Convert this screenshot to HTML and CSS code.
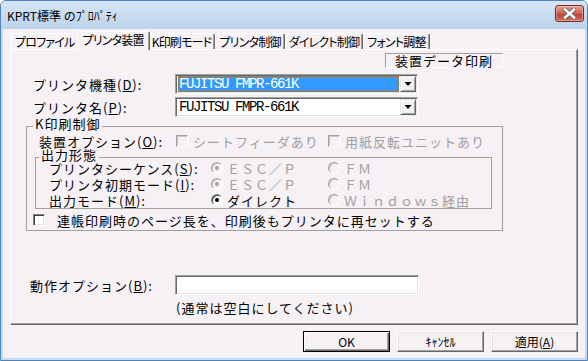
FILE: index.html
```html
<!DOCTYPE html>
<html lang="ja">
<head>
  <meta charset="UTF-8" />
  <title>KPRT標準 のﾌﾟﾛﾊﾟﾃｨ</title>
  <link rel="stylesheet" href="styles.css">
</head>
<body>

  <div class="window">
    <div class="titlebar">
      <span class="title">KPRT標準 のﾌﾟﾛﾊﾟﾃｨ</span>
      <button class="close-btn" aria-label="閉じる">
        <svg width="13" height="11" viewBox="0 0 13 11">
          <path d="M2 1.5 L11 9.5 M11 1.5 L2 9.5" stroke="#6b6b6b" stroke-width="4.4" stroke-linecap="square"/>
          <path d="M2 1.5 L11 9.5 M11 1.5 L2 9.5" stroke="#ffffff" stroke-width="2.4" stroke-linecap="square"/>
        </svg>
      </button>
    </div>

    <div class="client">
      <div class="tabs">
        <div class="tab">プロファイル</div>
        <div class="tab active">プリンタ装置</div>
        <div class="tab">K印刷モード</div>
        <div class="tab">プリンタ制御</div>
        <div class="tab">ダイレクト制御</div>
        <div class="tab">フォント調整</div>
      </div>

      <div class="panel">
        <div class="panel-head">
          <span class="device-box">装置データ印刷</span>
        </div>

        <div class="form-row first">
          <span class="form-label">プリンタ機種(<u>D</u>):</span>
          <div class="combo focus">
            <span class="combo-value">FUJITSU FMPR-661K</span>
            <span class="drop-btn"></span>
          </div>
        </div>
        <div class="form-row">
          <span class="form-label">プリンタ名(<u>P</u>):</span>
          <div class="combo">
            <span class="combo-value">FUJITSU FMPR-661K</span>
            <span class="drop-btn"></span>
          </div>
        </div>

        <fieldset class="group">
          <legend>K印刷制御</legend>
          <div class="opt-row">
            <span class="row-label">装置オプション(<u>O</u>):</span>
            <span class="choice disabled"><span class="box"></span>シートフィーダあり</span>
            <span class="choice disabled"><span class="box"></span>用紙反転ユニットあり</span>
          </div>

          <fieldset class="group inner">
            <legend>出力形態</legend>
            <div class="mode-grid">
              <span class="row-label">プリンタシーケンス(<u>S</u>):</span>
              <span class="choice disabled"><span class="radio checked"></span>ＥＳＣ／Ｐ</span>
              <span class="choice disabled"><span class="radio"></span>ＦＭ</span>

              <span class="row-label">プリンタ初期モード(<u>I</u>):</span>
              <span class="choice disabled"><span class="radio checked"></span>ＥＳＣ／Ｐ</span>
              <span class="choice disabled"><span class="radio"></span>ＦＭ</span>

              <span class="row-label">出力モード(<u>M</u>):</span>
              <span class="choice"><span class="radio checked"></span>ダイレクト</span>
              <span class="choice disabled"><span class="radio"></span>Ｗｉｎｄｏｗｓ経由</span>
            </div>
          </fieldset>

          <div class="check-row">
            <span class="box"></span>
            <span>連帳印刷時のページ長を、印刷後もプリンタに再セットする</span>
          </div>
        </fieldset>

        <div class="form-row extra">
          <span class="form-label">動作オプション(<u>B</u>):</span>
          <div class="textbox"></div>
        </div>
        <div class="hint">(通常は空白にしてください)</div>
      </div>

      <div class="buttons">
        <button class="btn default">OK</button>
        <button class="btn">ｷｬﾝｾﾙ</button>
        <button class="btn">適用(<u>A</u>)</button>
      </div>
    </div>
  </div>

</body>
</html>
```

FILE: styles.css
```css
:root {
  --face: #f5f1f5;
  --light: #ffffff;
  --soft: #e3e3e3;
  --shadow: #a0a0a0;
  --dark: #696969;
  --disabled: #a0a0a0;
  --select: #3399ff;
}

* {
  box-sizing: border-box;
}

body {
  margin: 0;
  font-family: "Noto Sans CJK JP", sans-serif;
  font-size: 12px;
  color: #000;
  background: #fff;
}

u {
  text-decoration-thickness: 1px;
  text-underline-offset: 1px;
}

.window {
  width: 588px;
  height: 361px;
  display: flex;
  flex-direction: column;
  border: 1px solid #4f84bb;
  border-radius: 6px 6px 0 0;
  background: #c6dbf0;
  overflow: hidden;
}

/* title bar */
.titlebar {
  flex: none;
  height: 28px;
  display: flex;
  align-items: center;
  justify-content: space-between;
  padding: 0 3px 0 6px;
  background: linear-gradient(#d6e5f5, #bcd3ea);
}

.title {
  font-size: 12px;
  color: #000;
}

.close-btn {
  align-self: flex-start;
  margin-top: 4px;
  width: 29px;
  height: 17px;
  padding: 0;
  display: flex;
  align-items: center;
  justify-content: center;
  border: 1px solid #6e2a24;
  border-radius: 3px;
  background: linear-gradient(#e4a193, #cf5f50 50%, #c0392b 51%, #d0705e);
  box-shadow: inset 0 0 0 1px rgba(255, 255, 255, 0.35);
}

/* client area */
.client {
  flex: 1;
  margin: 0 2px 2px;
  padding: 2px 7px 0;
  background: var(--face);
  display: flex;
  flex-direction: column;
}

.tabs {
  display: flex;
  align-items: flex-end;
  height: 18px;
  padding-left: 1px;
}

.tab {
  height: 16px;
  padding: 0 3px;
  line-height: 15px;
  letter-spacing: -0.8px;
  white-space: nowrap;
  font-feature-settings: "palt";
  border: 1px solid;
  border-bottom: 0;
  border-color: var(--light) var(--dark) transparent var(--light);
  border-radius: 2px 2px 0 0;
  box-shadow: inset -1px 0 0 var(--shadow);
  background: var(--face);
}

.tab.active {
  position: relative;
  z-index: 1;
  height: 19px;
  margin: 0 -2px -1px;
  padding: 0 5px;
}

.panel {
  height: 276px;
  padding: 3px 74px 0 15px;
  border: 1px solid;
  border-color: var(--light) var(--dark) var(--dark) var(--light);
  box-shadow: inset -1px -1px 0 var(--shadow);
  font-size: 13px;
  letter-spacing: 1px;
}

.panel-head {
  display: flex;
  justify-content: flex-end;
}

.device-box {
  width: 118px;
  height: 15px;
  line-height: 13px;
  text-align: center;
  border: 1px solid;
  border-color: var(--shadow) var(--light) var(--light) var(--shadow);
}

.form-row {
  display: flex;
  align-items: center;
  height: 20px;
  margin-top: 3px;
}

.form-row.first {
  margin-top: 6px;
}

.form-row.extra {
  margin-top: 44px;
}

.form-label {
  width: 149px;
  padding-left: 7px;
  white-space: nowrap;
}

.form-row.extra .form-label {
  padding-left: 4px;
}

.combo,
.textbox {
  height: 20px;
  border: 1px solid;
  border-color: var(--shadow) var(--light) var(--light) var(--shadow);
  box-shadow: inset 1px 1px 0 var(--dark), inset -1px -1px 0 var(--soft);
  background: #fff;
}

.combo {
  width: 243px;
  display: flex;
  align-items: center;
  padding: 1px 1px 1px 2px;
}

.textbox {
  width: 244px;
}

.combo-value {
  flex: 1;
  height: 16px;
  margin-right: 1px;
  padding-left: 1px;
  line-height: 16px;
  font-family: "Liberation Mono", monospace;
  font-size: 14px;
  letter-spacing: -1.4px;
  white-space: nowrap;
}

.combo.focus .combo-value {
  background: var(--select);
  color: #fff;
  outline: 1px dotted #c46a00;
  outline-offset: -1px;
}

.drop-btn {
  flex: none;
  width: 16px;
  height: 16px;
  display: flex;
  align-items: center;
  justify-content: center;
  border: 1px solid;
  border-color: var(--soft) var(--dark) var(--dark) var(--soft);
  box-shadow: inset 1px 1px 0 var(--light), inset -1px -1px 0 var(--shadow);
  background: #f0f0f0;
}

.drop-btn::after {
  content: "";
  width: 7px;
  height: 4px;
  background: #000;
  clip-path: polygon(0 0, 100% 0, 50% 100%);
}

/* group boxes */
.group {
  min-width: 0;
  margin: 0;
  padding: 0 0 2px;
  border: 1px solid var(--shadow);
}

.group legend {
  margin-left: 6px;
  padding: 0 2px 5px;
  line-height: 13px;
}

.group.inner {
  margin: -1px 10px 0 8px;
  padding-bottom: 0;
}

.group.inner legend {
  margin-left: 3px;
}

.opt-row {
  display: grid;
  grid-template-columns: 149px 152px auto;
  align-items: center;
  height: 16px;
  margin-top: -2px;
  line-height: 13px;
}

.opt-row .row-label {
  padding-left: 12px;
}

.mode-grid {
  display: grid;
  grid-template-columns: 175px 117px auto;
  grid-auto-rows: 16px;
  align-items: center;
  margin-top: -6px;
  line-height: 13px;
}

.mode-grid .row-label {
  padding-left: 13px;
  white-space: nowrap;
}

.choice {
  display: flex;
  align-items: center;
  gap: 5px;
  white-space: nowrap;
}

.mode-grid .choice {
  gap: 4px;
}

.choice.disabled {
  color: var(--disabled);
}

.box {
  flex: none;
  width: 12px;
  height: 12px;
  border: 1px solid;
  border-color: #808080 var(--light) var(--light) #808080;
  box-shadow: inset 1px 1px 0 #404040, inset -1px -1px 0 var(--soft);
  background: #fff;
}

.choice.disabled .box {
  border-color: var(--shadow) var(--light) var(--light) var(--shadow);
  box-shadow: inset 1px 1px 0 #c8c8c8;
  background: var(--face);
}

.radio {
  flex: none;
  position: relative;
  width: 12px;
  height: 12px;
  border-radius: 50%;
  border: 1px solid;
  border-color: #808080 var(--light) var(--light) #808080;
  box-shadow: inset 1px 1px 0 #404040;
  background: #fff;
}

.radio.checked::after {
  content: "";
  position: absolute;
  left: 3px;
  top: 3px;
  width: 4px;
  height: 4px;
  border-radius: 50%;
  background: #000;
}

.choice.disabled .radio {
  border-color: var(--shadow) var(--light) var(--light) var(--shadow);
  box-shadow: inset 1px 1px 0 #c8c8c8;
  background: var(--face);
}

.choice.disabled .radio.checked::after {
  background: var(--disabled);
}

.check-row {
  display: flex;
  align-items: center;
  gap: 12px;
  height: 16px;
  margin: 3px 0 0 6px;
  line-height: 13px;
  white-space: nowrap;
}

.hint {
  margin: 5px 0 0 150px;
  line-height: 16px;
}

/* dialog buttons */
.buttons {
  display: flex;
  justify-content: flex-end;
  gap: 7px;
  margin-top: 6px;
}

.btn {
  width: 87px;
  height: 21px;
  padding: 0;
  font-family: "Noto Sans CJK JP", sans-serif;
  font-size: 12px;
  color: #000;
  background: var(--face);
  border: 1px solid;
  border-color: var(--light) var(--dark) var(--dark) var(--light);
  box-shadow: inset -1px -1px 0 var(--shadow), inset 1px 1px 0 var(--soft);
}

.btn.default {
  border-color: #000;
  box-shadow: inset 1px 1px 0 var(--light), inset -1px -1px 0 var(--dark), inset -2px -2px 0 var(--shadow);
}
```
